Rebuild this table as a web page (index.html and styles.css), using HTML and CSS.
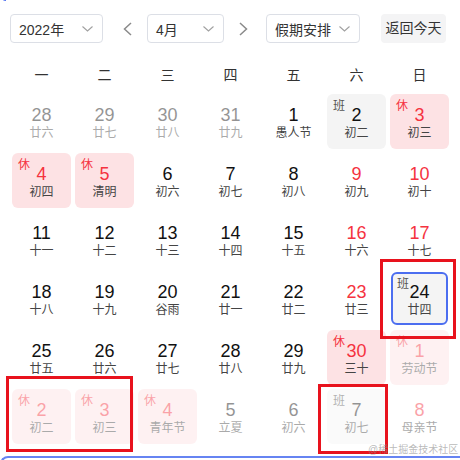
FILE: index.html
```html
<!DOCTYPE html>
<html lang="zh">
<head>
<meta charset="utf-8">
<link rel="stylesheet" href="styles.css">
</head>
<body>
<div class="page">
  <div class="toolbar">
    <div class="select sel-year"><span>2022年</span><svg class="chev" width="11" height="6" viewBox="0 0 11 6"><path d="M0.5 0.5 L5.5 5 L10.5 0.5" fill="none" stroke="#a0a0a0" stroke-width="1.1"/></svg></div>
    <div class="arrow arrow-prev"><svg width="9" height="14" viewBox="0 0 9 14"><path d="M8 1 L1.5 7 L8 13" fill="none" stroke="#8a8a8a" stroke-width="1.5"/></svg></div>
    <div class="select sel-month"><span>4月</span><svg class="chev" width="11" height="6" viewBox="0 0 11 6"><path d="M0.5 0.5 L5.5 5 L10.5 0.5" fill="none" stroke="#a0a0a0" stroke-width="1.1"/></svg></div>
    <div class="arrow arrow-next"><svg width="9" height="14" viewBox="0 0 9 14"><path d="M1 1 L7.5 7 L1 13" fill="none" stroke="#8a8a8a" stroke-width="1.5"/></svg></div>
    <div class="select sel-holiday"><span>假期安排</span><svg class="chev" width="11" height="6" viewBox="0 0 11 6"><path d="M0.5 0.5 L5.5 5 L10.5 0.5" fill="none" stroke="#a0a0a0" stroke-width="1.1"/></svg></div>
    <div class="today-btn">返回今天</div>
  </div>

  <div class="weekdays">
    <div>一</div><div>二</div><div>三</div><div>四</div><div>五</div><div>六</div><div>日</div>
  </div>

  <div class="grid">
    <div class="cell other"><div class="num">28</div><div class="lunar">廿六</div></div>
    <div class="cell other"><div class="num">29</div><div class="lunar">廿七</div></div>
    <div class="cell other"><div class="num">30</div><div class="lunar">廿八</div></div>
    <div class="cell other"><div class="num">31</div><div class="lunar">廿九</div></div>
    <div class="cell"><div class="num">1</div><div class="lunar">愚人节</div></div>
    <div class="cell work"><span class="tag">班</span><div class="num">2</div><div class="lunar">初二</div></div>
    <div class="cell rest"><span class="tag">休</span><div class="num">3</div><div class="lunar">初三</div></div>

    <div class="cell rest"><span class="tag">休</span><div class="num">4</div><div class="lunar">初四</div></div>
    <div class="cell rest"><span class="tag">休</span><div class="num">5</div><div class="lunar">清明</div></div>
    <div class="cell"><div class="num">6</div><div class="lunar">初六</div></div>
    <div class="cell"><div class="num">7</div><div class="lunar">初七</div></div>
    <div class="cell"><div class="num">8</div><div class="lunar">初八</div></div>
    <div class="cell weekend"><div class="num">9</div><div class="lunar">初九</div></div>
    <div class="cell weekend"><div class="num">10</div><div class="lunar">初十</div></div>

    <div class="cell"><div class="num">11</div><div class="lunar">十一</div></div>
    <div class="cell"><div class="num">12</div><div class="lunar">十二</div></div>
    <div class="cell"><div class="num">13</div><div class="lunar">十三</div></div>
    <div class="cell"><div class="num">14</div><div class="lunar">十四</div></div>
    <div class="cell"><div class="num">15</div><div class="lunar">十五</div></div>
    <div class="cell weekend"><div class="num">16</div><div class="lunar">十六</div></div>
    <div class="cell weekend"><div class="num">17</div><div class="lunar">十七</div></div>

    <div class="cell"><div class="num">18</div><div class="lunar">十八</div></div>
    <div class="cell"><div class="num">19</div><div class="lunar">十九</div></div>
    <div class="cell"><div class="num">20</div><div class="lunar">谷雨</div></div>
    <div class="cell"><div class="num">21</div><div class="lunar">廿一</div></div>
    <div class="cell"><div class="num">22</div><div class="lunar">廿二</div></div>
    <div class="cell weekend"><div class="num">23</div><div class="lunar">廿三</div></div>
    <div class="cell work selected"><span class="tag">班</span><div class="num">24</div><div class="lunar">廿四</div></div>

    <div class="cell"><div class="num">25</div><div class="lunar">廿五</div></div>
    <div class="cell"><div class="num">26</div><div class="lunar">廿六</div></div>
    <div class="cell"><div class="num">27</div><div class="lunar">廿七</div></div>
    <div class="cell"><div class="num">28</div><div class="lunar">廿八</div></div>
    <div class="cell"><div class="num">29</div><div class="lunar">廿九</div></div>
    <div class="cell rest"><span class="tag">休</span><div class="num">30</div><div class="lunar">三十</div></div>
    <div class="cell rest other"><span class="tag">休</span><div class="num">1</div><div class="lunar">劳动节</div></div>

    <div class="cell rest other"><span class="tag">休</span><div class="num">2</div><div class="lunar">初二</div></div>
    <div class="cell rest other"><span class="tag">休</span><div class="num">3</div><div class="lunar">初三</div></div>
    <div class="cell rest other"><span class="tag">休</span><div class="num">4</div><div class="lunar">青年节</div></div>
    <div class="cell other"><div class="num">5</div><div class="lunar">立夏</div></div>
    <div class="cell other"><div class="num">6</div><div class="lunar">初六</div></div>
    <div class="cell work other"><span class="tag">班</span><div class="num">7</div><div class="lunar">初七</div></div>
    <div class="cell weekend other"><div class="num">8</div><div class="lunar">母亲节</div></div>
  </div>

  <div class="mark mark-24"></div>
  <div class="mark mark-23"></div>
  <div class="mark mark-7"></div>
  <div class="frame-top"></div>
  <div class="frame-bottom"></div>
  <div class="watermark">@稀土掘金技术社区</div>
</div>
</body>
</html>
```

FILE: styles.css
```css
* { box-sizing: border-box; }
html, body {
  margin: 0;
  padding: 0;
  background: #fff;
}
body {
  font-family: "Liberation Sans", "Noto Sans CJK SC", sans-serif;
  color: #222;
}
.page {
  position: relative;
  width: 460px;
  height: 460px;
  padding: 14px 10px 0 10px;
  overflow: hidden;
}
.toolbar {
  display: flex;
  align-items: center;
  height: 29px;
}
.select {
  display: flex;
  align-items: center;
  justify-content: space-between;
  height: 29px;
  border: 1px solid #dcdfe6;
  border-radius: 4px;
  padding: 0 9px 0 8px;
  font-size: 14px;
  color: #333;
}
.sel-year { width: 93px; }
.sel-month { width: 77px; }
.sel-holiday { width: 94px; }
.arrow {
  display: flex;
  align-items: center;
  height: 29px;
}
.arrow-prev { margin: 0 15px 0 20px; }
.arrow-next { margin: 0 18px 0 15px; }
.today-btn {
  margin-left: 21px;
  width: 65px;
  height: 29px;
  line-height: 29px;
  text-align: center;
  background: #f4f4f5;
  border-radius: 4px;
  font-size: 14px;
  color: #333;
}
.weekdays {
  display: grid;
  grid-template-columns: repeat(7, 59px);
  column-gap: 4px;
  margin: 17px 2px 0 2px;
  height: 30px;
  line-height: 30px;
  text-align: center;
  font-size: 14px;
  color: #333;
}
.grid {
  display: grid;
  grid-template-columns: repeat(7, 59px);
  grid-auto-rows: 55px;
  gap: 4px;
  margin: 4px 2px 0 2px;
}
.cell {
  position: relative;
  border-radius: 6px;
  padding-top: 11px;
  text-align: center;
}
.num {
  font-size: 18px;
  line-height: 20px;
  color: #111;
}
.lunar {
  font-size: 12px;
  line-height: 16px;
  color: #444;
}
.tag {
  position: absolute;
  left: 6px;
  top: 5px;
  font-size: 12px;
  line-height: 14px;
}
.rest { background: #fde2e4; }
.rest .num, .rest .tag, .weekend .num { color: #f5333f; }
.work { background: #f4f4f4; }
.work .tag { color: #555; }
.other { opacity: 0.45; }
.selected {
  border: 2px solid #4c6ef0;
  margin: 1px;
  padding-top: 8px;
}
.selected .tag { left: 4px; top: 3px; }
.mark {
  position: absolute;
  border: 3px solid #e8121d;
}
.mark-24 { left: 380px; top: 259px; width: 76px; height: 80px; }
.mark-23 { left: 6px; top: 376px; width: 127px; height: 76px; }
.mark-7 { left: 318px; top: 384px; width: 70px; height: 70px; }
.frame-top {
  position: absolute;
  left: 0;
  top: -6px;
  width: 6px;
  height: 7px;
  border-bottom: 2px solid #4c6ef0;
  border-bottom-left-radius: 6px;
}
.frame-bottom {
  position: absolute;
  left: 0;
  top: 456px;
  width: 460px;
  height: 10px;
  border-top: 2px solid #6684f2;
  border-left: 2px solid #6684f2;
  border-top-left-radius: 8px;
}
.watermark {
  position: absolute;
  left: 368px;
  top: 444px;
  font-size: 10px;
  line-height: 12px;
  color: rgba(140, 140, 140, 0.6);
  white-space: nowrap;
}
```
